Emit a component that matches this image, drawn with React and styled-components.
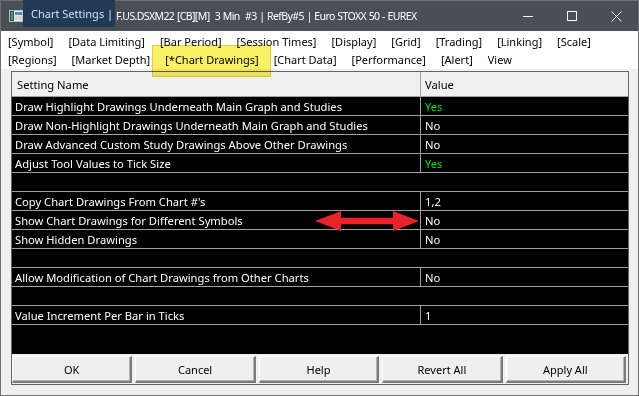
import React from "react";
import styled, { createGlobalStyle } from "styled-components";

const titleBg = "#4a4f55";
const navy = "#233a57";
const line = "#a0a0a0";
const panel = "#f0f0f0";
const green = "#00e000";
const font = "'Noto Sans', 'Open Sans', sans-serif";

const Global = createGlobalStyle`
    html, body {
        margin: 0;
        padding: 0;
        background: ${panel};
        overflow: hidden;
    }
    * {
        box-sizing: border-box;
    }
`

const Window = styled("div")`
    position: relative;
    width: 639px;
    height: 396px;
    border: 1px solid #6b7075;
    background: ${panel};
    display: flex;
    flex-direction: column;
    font-family: ${font};
    font-size: 11px;
    color: #000;
`

const TitleBar = styled("div")`
    height: 30px;
    background: ${titleBg};
    display: flex;
    align-items: flex-start;
    padding-left: 8px;
    color: #fff;
    white-space: nowrap;
`

const AppIcon = styled("svg")`
    margin-top: 9px;
    flex: none;
`

const Caption = styled("div")`
    display: flex;
    align-items: center;
    height: 30px;
    flex: 1;
    font-size: 11px;
`

const CaptionMark = styled("span")`
    display: inline-flex;
    align-items: center;
    align-self: flex-start;
    height: 27px;
    margin-top: -1px;
    padding: 0 2px 0 8px;
    background: ${navy};
    color: #cfe0f4;
`

const CaptionRest = styled("span")`
    padding-left: 1px;
    font-size: 10.5px;
    letter-spacing: -0.6px;
    word-spacing: 0.5px;
`

const WinButtons = styled("div")`
    display: flex;
    height: 30px;
`

const WinButton = styled("div")`
    width: 44px;
    height: 30px;
    display: flex;
    align-items: center;
    justify-content: center;
`

const Tabs = styled("div")`
    background: #fff;
    padding: 1px 0 1px 7px;
    display: flex;
    flex-direction: column;
`

const TabRow = styled("div")`
    display: flex;
    gap: 15px;
    height: 18px;
    align-items: center;
    white-space: nowrap;
`

const Body = styled("div")`
    flex: 1;
    padding: 2px 9px 10px 10px;
    display: flex;
`

const Frame = styled("div")`
    flex: 1;
    border: 1px solid #646464;
    display: flex;
    flex-direction: column;
`

const Grid = styled("div")`
    flex: 1;
    background: #000;
    display: flex;
    flex-direction: column;
    font-size: 11.2px;
`

const HeadRow = styled("div")`
    display: grid;
    grid-template-columns: 408px 1fr;
    height: 25px;
    background: ${panel};
    border-bottom: 1px solid ${line};
`

const HeadCell = styled("div")`
    display: flex;
    align-items: center;
    padding-left: ${p => p.$pad}px;
    border-left: ${p => p.$divider ? `1px solid ${line}` : "none"};
`

const Row = styled("div")`
    display: grid;
    grid-template-columns: 408px 1fr;
    height: 19px;
    border-bottom: 1px solid ${line};
    color: #fff;
`

const Cell = styled("div")`
    display: flex;
    align-items: center;
    padding-left: ${p => p.$pad}px;
    border-left: ${p => p.$divider ? `1px solid ${line}` : "none"};
    color: ${p => p.$green ? green : "#fff"};
    white-space: nowrap;
    overflow: hidden;
`

const ButtonBar = styled("div")`
    display: grid;
    grid-template-columns: repeat(5, 1fr);
    gap: 3px;
    padding: 2px 2px 1px 0;
    background: ${panel};
`

const Button = styled("div")`
    height: 27px;
    display: flex;
    align-items: center;
    justify-content: center;
    background: #efefef;
    border-top: 1px solid #fff;
    border-left: 1px solid #fff;
    border-right: 2px solid #7a7a7a;
    border-bottom: 2px solid #7a7a7a;
    box-shadow: inset -1px -1px 0 #b4b4b4;
`

const Highlight = styled("div")`
    position: absolute;
    left: 151px;
    top: 44px;
    width: 119px;
    height: 32px;
    background: #faf066;
    border: 1px solid #e2cf3a;
    mix-blend-mode: multiply;
    pointer-events: none;
`

const Arrow = styled("svg")`
    position: absolute;
    left: 314px;
    top: 209px;
`

const tabs1 = ["[Symbol]", "[Data Limiting]", "[Bar Period]", "[Session Times]", "[Display]", "[Grid]", "[Trading]", "[Linking]", "[Scale]"];
const tabs2 = ["[Regions]", "[Market Depth]", "[*Chart Drawings]", "[Chart Data]", "[Performance]", "[Alert]", "View"];

const rows = [
    { name: "Draw Highlight Drawings Underneath Main Graph and Studies", value: "Yes" },
    { name: "Draw Non-Highlight Drawings Underneath Main Graph and Studies", value: "No" },
    { name: "Draw Advanced Custom Study Drawings Above Other Drawings", value: "No" },
    { name: "Adjust Tool Values to Tick Size", value: "Yes" },
    null,
    { name: "Copy Chart Drawings From Chart #'s", value: "1,2" },
    { name: "Show Chart Drawings for Different Symbols", value: "No" },
    { name: "Show Hidden Drawings", value: "No" },
    null,
    { name: "Allow Modification of Chart Drawings from Other Charts", value: "No" },
    null,
    { name: "Value Increment Per Bar in Ticks", value: "1" },
];

const buttons = ["OK", "Cancel", "Help", "Revert All", "Apply All"];

const App = () => {
    return (
        <>
            <Global />
            <Window>
                <TitleBar>
                    <AppIcon width="14" height="12" viewBox="0 0 14 12">
                        <rect x="0.5" y="0.5" width="13" height="11" fill="#e8ecef" stroke="#b8bec4" />
                        <rect x="1" y="1" width="4" height="10" fill="#3c4a54" />
                        <rect x="2" y="2" width="2" height="8" fill="#3aa860" />
                        <rect x="6" y="2" width="7" height="3" fill="#5b86b8" />
                        <rect x="6" y="6" width="7" height="4" fill="#cfd8e2" />
                    </AppIcon>
                    <Caption>
                        <CaptionMark>Chart Settings |</CaptionMark>
                        <CaptionRest>F.US.DSXM22 [CB][M]&nbsp; 3 Min&nbsp; #3 | RefBy#5 | Euro STOXX 50 - EUREX</CaptionRest>
                    </Caption>
                    <WinButtons>
                        <WinButton>
                            <svg width="10" height="10" viewBox="0 0 10 10"><path d="M0 5.5h10" stroke="#fff" strokeWidth="1" /></svg>
                        </WinButton>
                        <WinButton>
                            <svg width="10" height="10" viewBox="0 0 10 10"><rect x="0.5" y="0.5" width="9" height="9" fill="none" stroke="#fff" strokeWidth="1" /></svg>
                        </WinButton>
                        <WinButton>
                            <svg width="11" height="11" viewBox="0 0 11 11"><path d="M0.5 0.5l10 10M10.5 0.5l-10 10" stroke="#fff" strokeWidth="1" /></svg>
                        </WinButton>
                    </WinButtons>
                </TitleBar>
                <Tabs>
                    <TabRow>{tabs1.map(t => <span key={t}>{t}</span>)}</TabRow>
                    <TabRow>{tabs2.map(t => <span key={t}>{t}</span>)}</TabRow>
                </Tabs>
                <Body>
                    <Frame>
                        <Grid>
                            <HeadRow>
                                <HeadCell $pad={5}>Setting Name</HeadCell>
                                <HeadCell $pad={4} $divider>Value</HeadCell>
                            </HeadRow>
                            {rows.map((r, i) => r ? (
                                <Row key={i}>
                                    <Cell $pad={3}>{r.name}</Cell>
                                    <Cell $pad={4} $divider $green={r.value === "Yes"}>{r.value}</Cell>
                                </Row>
                            ) : (
                                <Row key={i} />
                            ))}
                        </Grid>
                        <ButtonBar>
                            {buttons.map(b => <Button key={b}>{b}</Button>)}
                        </ButtonBar>
                    </Frame>
                </Body>
                <Highlight />
                <Arrow width="106" height="22" viewBox="0 0 106 22">
                    <path d="M0 11 L26 1 L26 7.7 L78 7.7 L78 1 L104 11 L78 21 L78 14.3 L26 14.3 L26 21 Z" fill="#e8232b" />
                </Arrow>
            </Window>
        </>
    )
}

export default App;
